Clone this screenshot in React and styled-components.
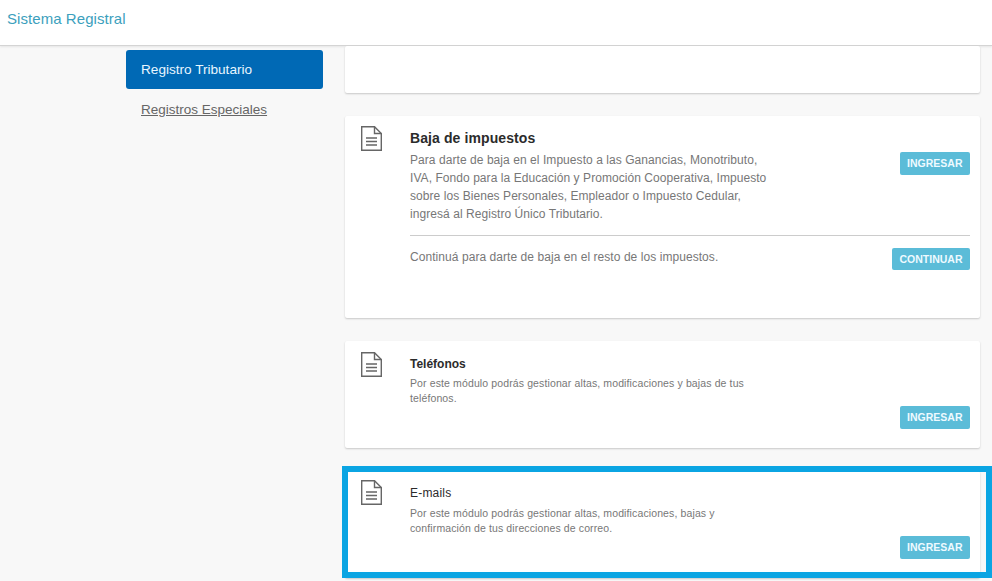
import React from "react";
import styled, { createGlobalStyle } from "styled-components";

const Global = createGlobalStyle`
  html, body { margin: 0; padding: 0; height: 581px; overflow: hidden; background: #f8f8f8; }
  body { font-family: "Liberation Sans", Arial, sans-serif; }
  * { box-sizing: border-box; }
`;

const Page = styled.div`
  position: relative;
  width: 992px;
  height: 581px;
  overflow: hidden;
`;
const Header = styled.header`
  height: 46px;
  background: #fff;
  border-bottom: 1px solid #d4d4d4;
  box-shadow: 0 1px 2px rgba(0,0,0,.08);
  padding: 11px 0 0 7px;
`;
const Brand = styled.div`
  font-size: 15px;
  line-height: 16px;
  letter-spacing: 0.06px;
  color: #3c9fbd;
`;
const Main = styled.div`
  display: grid;
  grid-template-columns: 197px 635px;
  column-gap: 22px;
  padding-left: 126px;
`;
const Side = styled.nav`
  display: flex;
  flex-direction: column;
  padding-top: 4px;
`;
const NavActive = styled.a`
  height: 39px;
  display: flex;
  align-items: center;
  padding: 0 0 1px 15px;
  background: #0069b5;
  border-radius: 3px;
  color: #e8f6ff;
  font-size: 13.6px;
`;
const NavLink = styled.a`
  margin: 12px 0 0 15px;
  font-size: 13.5px;
  line-height: 17px;
  color: #666;
  text-decoration: underline;
`;
const Cards = styled.section`
  display: flex;
  flex-direction: column;
  gap: 23px;
`;
const Card = styled.article`
  display: flex;
  height: ${(p) => p.$h}px;
  padding: 0 10px 0 16px;
  background: #fff;
  border-radius: 2px;
  box-shadow: 0 1px 2px rgba(0,0,0,.2);
`;
const IconCol = styled.div`
  width: 49px;
  flex: none;
  padding-top: ${(p) => p.$top}px;
`;
const Body = styled.div`
  flex: 1;
  min-width: 0;
  padding-top: ${(p) => p.$top}px;
`;
const Title = styled.h3`
  margin: 0;
  font-size: ${(p) => (p.$small ? 12 : 14)}px;
  font-weight: ${(p) => (p.$plain ? 400 : 700)};
  line-height: 20px;
  color: #2b2b2b;
  letter-spacing: ${(p) => (p.$plain ? 0.2 : p.$small ? 0 : 0.1)}px;
`;
const Row = styled.div`
  display: flex;
  justify-content: space-between;
  align-items: flex-start;
`;
const Text = styled.p`
  margin: ${(p) => p.$top ?? 3}px 0 0;
  width: ${(p) => (p.$small ? 340 : 362)}px;
  font-size: ${(p) => (p.$small ? 10.5 : 12)}px;
  line-height: ${(p) => (p.$small ? 15 : 18)}px;
  color: #777;
  letter-spacing: ${(p) => (p.$small ? 0.12 : 0.06)}px;
`;
const Button = styled.button`
  height: ${(p) => p.$h ?? 23}px;
  margin-top: ${(p) => p.$top ?? 0}px;
  padding: 0 7.5px 1px;
  border: 0;
  border-radius: 2px;
  background: #5bbcd8;
  color: #eefaff;
  font: 700 10.5px "Liberation Sans", Arial, sans-serif;
  flex: none;
`;
const Divider = styled.hr`
  margin: 12px 0;
  border: 0;
  border-top: 1px solid #ccc;
`;
const BottomRight = styled.div`
  display: flex;
  justify-content: flex-end;
  margin-top: ${(p) => p.$top}px;
`;
const Highlight = styled.div`
  position: absolute;
  left: 342px;
  top: 466px;
  width: 650px;
  height: 112px;
  border: 6px solid #0ba5e3;
  pointer-events: none;
`;

const DocIcon = () => (
  <svg width="21" height="25" viewBox="0 0 21 25" fill="none" stroke="#666" strokeWidth="1.4">
    <path d="M.7.7H13.5L20.3 7.5V24.3H.7Z" />
    <path d="M13.5.7V7.5H20.3" />
    <path d="M5 12H16M5 15.5H16M5 19H16" />
  </svg>
);

export default function App() {
  return (
    <Page>
      <Global />
      <Header><Brand>Sistema Registral</Brand></Header>
      <Main>
        <Side>
          <NavActive>Registro Tributario</NavActive>
          <NavLink>Registros Especiales</NavLink>
        </Side>
        <Cards>
          <Card $h={47} />
          <Card $h={202}>
            <IconCol $top={10}><DocIcon /></IconCol>
            <Body $top={12}>
              <Title>Baja de impuestos</Title>
              <Row>
                <Text>Para darte de baja en el Impuesto a las Ganancias, Monotributo, IVA, Fondo para la Educación y Promoción Cooperativa, Impuesto sobre los Bienes Personales, Empleador o Impuesto Cedular, ingresá al Registro Único Tributario.</Text>
                <Button $top={4}>INGRESAR</Button>
              </Row>
              <Divider />
              <Row>
                <Text $top={0}>Continuá para darte de baja en el resto de los impuestos.</Text>
                <Button $h={22}>CONTINUAR</Button>
              </Row>
            </Body>
          </Card>
          <Card $h={107}>
            <IconCol $top={11}><DocIcon /></IconCol>
            <Body $top={13}>
              <Title $small>Teléfonos</Title>
              <Text $small $top={2}>Por este módulo podrás gestionar altas, modificaciones y bajas de tus teléfonos.</Text>
              <BottomRight $top={0}><Button>INGRESAR</Button></BottomRight>
            </Body>
          </Card>
          <Card $h={107}>
            <IconCol $top={9}><DocIcon /></IconCol>
            <Body $top={12}>
              <Title $small $plain>E-mails</Title>
              <Text $small $top={3}>Por este módulo podrás gestionar altas, modificaciones, bajas y confirmación de tus direcciones de correo.</Text>
              <BottomRight $top={0}><Button>INGRESAR</Button></BottomRight>
            </Body>
          </Card>
        </Cards>
      </Main>
      <Highlight />
    </Page>
  );
}
